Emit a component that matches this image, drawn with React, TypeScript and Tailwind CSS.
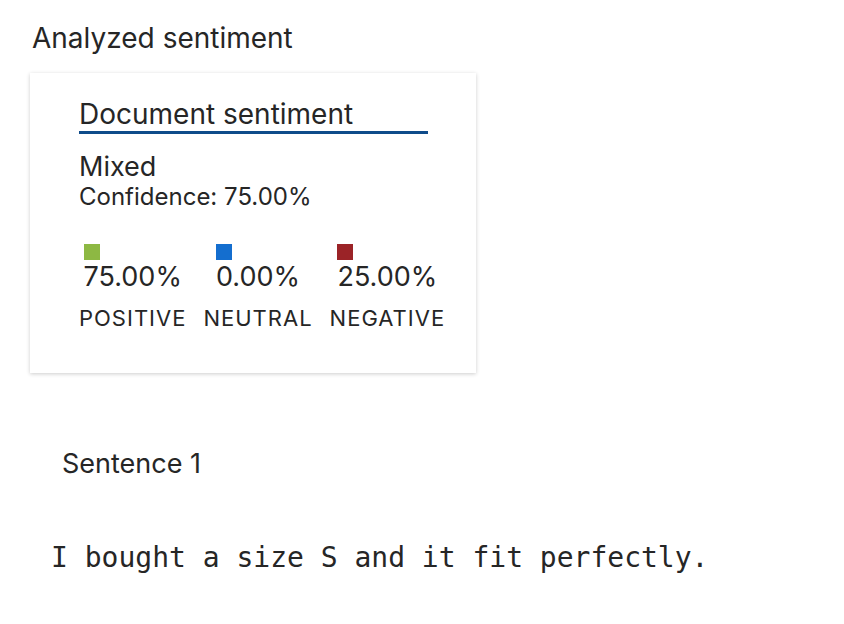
const scores = [
  { label: 'POSITIVE', value: '75.00%', color: 'bg-[#8db843]' },
  { label: 'NEUTRAL', value: '0.00%', color: 'bg-[#146ecf]' },
  { label: 'NEGATIVE', value: '25.00%', color: 'bg-[#9b2327]' },
];

const App = () => {
  return (
    <div className="min-h-screen bg-white text-[#262626] font-['Inter',sans-serif]">
      <div className="pt-[22px] pl-[32px]">
        <h2 className="text-[28px] leading-[32px]">Analyzed sentiment</h2>
      </div>

      <div className="ml-[30px] mt-[19px] w-[446px] h-[300px] bg-white shadow-[0_1px_4px_rgba(0,0,0,0.2)] pl-[49px] pt-[25px]">
        <div className="w-[349px] border-b-[3px] border-[#0f4c8a] text-[28px] leading-[33px]">
          Document sentiment
        </div>
        <div className="mt-[18px] text-[27px] leading-[30px]">Mixed</div>
        <div className="mt-[2px] text-[24px] leading-[26px]">Confidence: 75.00%</div>

        <div className="mt-[34px] flex gap-[17px]">
          {scores.map((s) => (
            <div key={s.label} className="flex flex-col items-center">
              <div className="flex flex-col items-start">
                <div className={`w-4 h-4 ${s.color}`} />
                <div className="text-[27px] leading-[34px]">{s.value}</div>
              </div>
              <div className="mt-[10px] text-[22px] leading-[28px] tracking-[1px]">{s.label}</div>
            </div>
          ))}
        </div>
      </div>

      <div className="pl-[62px] mt-[74px] text-[27px] leading-[34px]">Sentence 1</div>
      <div className="pl-[51px] mt-[59px] text-[28px] leading-[36px] font-['DejaVu_Sans_Mono',monospace]">
        I bought a size S and it fit perfectly.
      </div>
    </div>
  );
};

export default App;
